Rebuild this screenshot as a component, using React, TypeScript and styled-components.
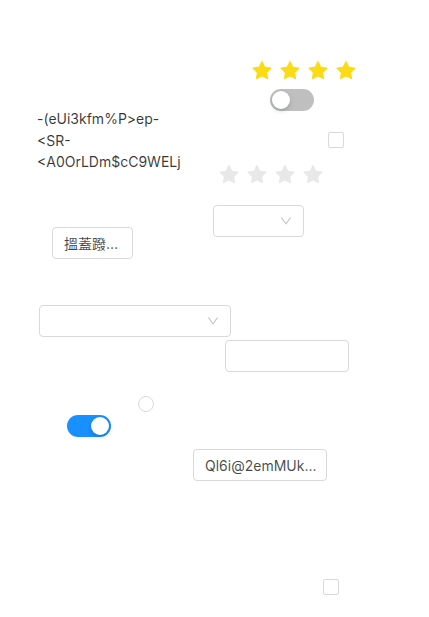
import React from "react";
import styled, { createGlobalStyle } from "styled-components";

const Global = createGlobalStyle`
  html, body { margin: 0; padding: 0; background: #fff; }
  body { font-family: Inter, "Noto Sans", "Noto Sans CJK SC", sans-serif; font-size: 14px; color: rgba(0,0,0,0.85); }
`;

const Canvas = styled.div`
  position: relative;
  width: 429px;
  height: 617px;
  overflow: hidden;
`;

/* Each widget sits at its own spot on a free canvas */
const Place = styled.div<{ $x: number; $y: number }>`
  position: absolute;
  left: ${(p) => p.$x}px;
  top: ${(p) => p.$y}px;
`;

const RateList = styled.ul`
  display: flex;
  gap: 8px;
  margin: 0;
  padding: 0;
  list-style: none;
`;

const Star = styled.li<{ $on: boolean }>`
  width: 20px;
  height: 20px;
  display: flex;
  color: ${(p) => (p.$on ? "#fadb14" : "#e8e8e8")};
  svg { width: 20px; height: 20px; }
`;

const STAR =
  "M908.1 353.1l-253.9-36.9L540.7 86.1c-3.1-6.3-8.2-11.4-14.5-14.5-15.8-7.8-35-1.3-42.9 14.5L369.8 316.2l-253.9 36.9c-7 1-13.4 4.3-18.3 9.3a32.05 32.05 0 00.6 45.3l183.7 179.1-43.4 252.9a31.95 31.95 0 0046.4 33.7L512 754l227.1 119.4c6.2 3.3 13.4 4.4 20.3 3.2 17.4-3 29.1-19.5 26.1-36.9l-43.4-252.9 183.7-179.1c5-4.9 8.3-11.3 9.3-18.3 2.7-17.5-9.5-33.7-27-36.3z";

const DOWN =
  "M884 256h-75c-5.1 0-9.9 2.5-12.9 6.6L512 654.2 227.9 262.6c-3-4.1-7.8-6.6-12.9-6.6h-75c-6.5 0-10.3 7.4-6.5 12.7l352.6 486.1c12.8 17.6 39 17.6 51.7 0l352.6-486.1c3.9-5.3.1-12.7-6.4-12.7z";

const Rate = ({ on }: { on: boolean }) => (
  <RateList>
    {[0, 1, 2, 3].map((i) => (
      <Star key={i} $on={on}>
        <svg viewBox="64 64 896 896" fill="currentColor">
          <path d={STAR} />
        </svg>
      </Star>
    ))}
  </RateList>
);

const SwitchTrack = styled.div<{ $on: boolean }>`
  position: relative;
  width: 44px;
  height: 22px;
  border-radius: 11px;
  background: ${(p) => (p.$on ? "#1890ff" : "#bfbfbf")};
`;

const SwitchKnob = styled.span<{ $on: boolean }>`
  position: absolute;
  top: 2px;
  left: ${(p) => (p.$on ? "24px" : "2px")};
  width: 18px;
  height: 18px;
  border-radius: 50%;
  background: #fff;
  box-shadow: 0 2px 4px rgba(0, 35, 11, 0.2);
`;

const Switch = ({ on }: { on: boolean }) => (
  <SwitchTrack $on={on}>
    <SwitchKnob $on={on} />
  </SwitchTrack>
);

const Para = styled.div`
  display: flex;
  flex-direction: column;
  font-size: 14px;
  line-height: 21.5px;
  color: rgba(0, 0, 0, 0.78);
  span { white-space: nowrap; }
`;

const Checkbox = styled.span`
  display: block;
  width: 16px;
  height: 16px;
  box-sizing: border-box;
  border: 1px solid #d9d9d9;
  border-radius: 2px;
  background: #fff;
`;

const Radio = styled.span`
  display: block;
  width: 16px;
  height: 16px;
  box-sizing: border-box;
  border: 1px solid #d9d9d9;
  border-radius: 50%;
  background: #fff;
`;

const SelectBox = styled.div<{ $w: number }>`
  width: ${(p) => p.$w}px;
  height: 32px;
  box-sizing: border-box;
  border: 1px solid #d9d9d9;
  border-radius: 4px;
  background: #fff;
  display: flex;
  align-items: center;
  justify-content: flex-end;
  padding-right: 11px;
  color: rgba(0, 0, 0, 0.25);
  svg { width: 12px; height: 12px; }
`;

const Select = ({ w }: { w: number }) => (
  <SelectBox $w={w}>
    <svg viewBox="64 64 896 896" fill="currentColor">
      <path d={DOWN} />
    </svg>
  </SelectBox>
);

const Input = styled.div<{ $w: number }>`
  width: ${(p) => p.$w}px;
  height: 32px;
  box-sizing: border-box;
  border: 1px solid #d9d9d9;
  border-radius: 4px;
  background: #fff;
`;

const Button = styled.div<{ $w: number }>`
  width: ${(p) => p.$w}px;
  height: 32px;
  box-sizing: border-box;
  border: 1px solid #d9d9d9;
  border-radius: 4px;
  background: #fff;
  padding: 0 11px;
  display: flex;
  align-items: center;
  font-size: 14px;
  color: rgba(0, 0, 0, 0.72);
  white-space: nowrap;
  overflow: hidden;
`;

export default function App() {
  return (
    <>
      <Global />
      <Canvas>
        <Place $x={252} $y={61}>
          <Rate on />
        </Place>
        <Place $x={270} $y={89}>
          <Switch on={false} />
        </Place>
        <Place $x={37} $y={108}>
          <Para>
            <span>-(eUi3kfm%P&gt;ep-</span>
            <span>&lt;SR-</span>
            <span>&lt;A0OrLDm$cC9WELj</span>
          </Para>
        </Place>
        <Place $x={328} $y={132}>
          <Checkbox />
        </Place>
        <Place $x={219} $y={165}>
          <Rate on={false} />
        </Place>
        <Place $x={213} $y={205}>
          <Select w={91} />
        </Place>
        <Place $x={52} $y={227}>
          <Button $w={81}>搵蓋蹳...</Button>
        </Place>
        <Place $x={39} $y={305}>
          <Select w={192} />
        </Place>
        <Place $x={225} $y={340}>
          <Input $w={124} />
        </Place>
        <Place $x={138} $y={396}>
          <Radio />
        </Place>
        <Place $x={67} $y={415}>
          <Switch on />
        </Place>
        <Place $x={193} $y={449}>
          <Button $w={134}>Ql6i@2emMUk...</Button>
        </Place>
        <Place $x={323} $y={579}>
          <Checkbox />
        </Place>
      </Canvas>
    </>
  );
}
